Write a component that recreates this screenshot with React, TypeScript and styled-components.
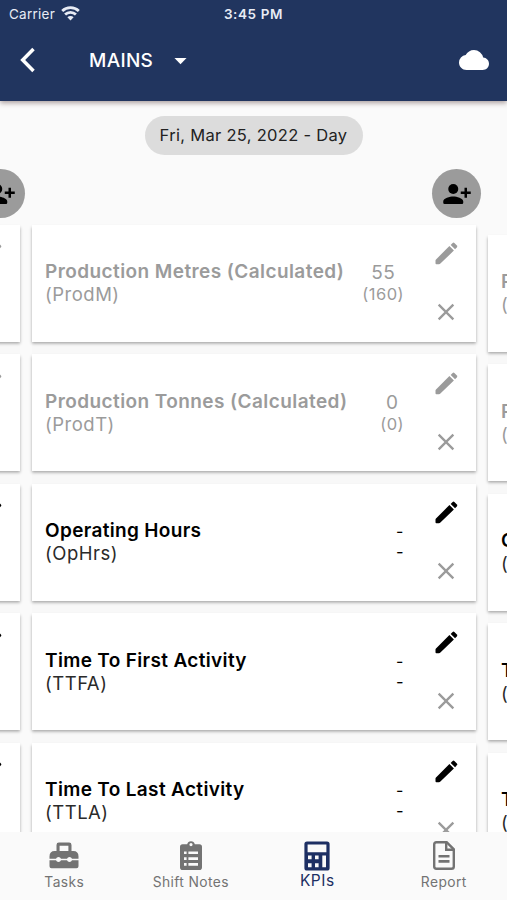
import React from "react";
import styled, { createGlobalStyle } from "styled-components";
import { MdArrowDropDown, MdClose, MdCloud } from "react-icons/md";

const GlobalStyle = createGlobalStyle`
  * { box-sizing: border-box; }
  body { margin: 0; background: #fafafa; }
  button { border: 0; padding: 0; background: none; font: inherit; color: inherit; }
  svg { display: block; flex: none; }
`;

const Screen = styled.div`
  width: 507px;
  height: 900px;
  display: flex;
  flex-direction: column;
  overflow: hidden;
  background: #fafafa;
  font-family: Inter, "Liberation Sans", sans-serif;
`;

const Header = styled.header`
  height: 101px;
  flex: none;
  background: #21355f;
  color: #fff;
  box-shadow: 0 2px 5px rgba(60, 30, 30, 0.42);
`;

const StatusBar = styled.div`
  display: grid;
  grid-template-columns: 1fr auto 1fr;
  align-items: center;
  height: 27px;
  padding: 0 9px;
  color: #e8ecf5;
`;

const Carrier = styled.div`
  display: flex;
  align-items: center;
  gap: 6px;
  font-size: 13.5px;
  letter-spacing: 0.25px;
`;

const Clock = styled.time`
  font-size: 13.5px;
  font-weight: 600;
  letter-spacing: 0.6px;
`;

const NavBar = styled.div`
  display: flex;
  align-items: center;
  height: 66px;
  padding: 0 18px 0 20px;
`;

const SectionPicker = styled.button`
  display: flex;
  align-items: center;
  gap: 13px;
  margin: 0 auto 0 53px;
  font-size: 19px;
  font-weight: 500;
  letter-spacing: 0.3px;
`;

const DateRow = styled.div`
  display: flex;
  justify-content: center;
  flex: none;
  padding-top: 15px;
`;

const DateChip = styled.button`
  width: 218px;
  height: 39px;
  padding-bottom: 2px;
  border-radius: 20px;
  background: #dcdcdc;
  color: #222;
  font-size: 16.5px;
  letter-spacing: 0.3px;
  white-space: nowrap;
`;

const Board = styled.main`
  flex: 1;
  min-height: 0;
  display: flex;
  justify-content: center;
  gap: 12px;
  overflow: hidden;
  padding-top: 14px;
`;

const Column = styled.section<{ $drop?: number }>`
  width: 444px;
  flex: none;
  display: flex;
  flex-direction: column;
  padding-top: ${(p) => p.$drop ?? 0}px;
`;

const AssignButton = styled.button`
  width: 49px;
  height: 49px;
  flex: none;
  align-self: flex-end;
  display: flex;
  align-items: center;
  justify-content: center;
  margin: 0 -5.5px 6.5px 0;
  border-radius: 50%;
  background: #9b9b9b;
  color: #000;
`;

const CardList = styled.div`
  display: flex;
  flex-direction: column;
  gap: 12.5px;
  background: #f8f8f8;
`;

const Card = styled.article<{ $muted?: boolean }>`
  display: flex;
  height: 117px;
  flex: none;
  padding: 0 14px 0 13.5px;
  background: #fff;
  color: ${(p) => (p.$muted ? "#9b9b9b" : "#000")};
  box-shadow: 0 1.5px 3px rgba(0, 0, 0, 0.34);
`;

const Names = styled.div`
  flex: 1;
  padding-top: 35.5px;
  font-size: 19px;
  line-height: 23px;
  white-space: nowrap;
`;

const Title = styled.h2<{ $muted?: boolean }>`
  margin: 0;
  font-size: 19px;
  font-weight: 600;
  letter-spacing: ${(p) => (p.$muted ? 0.42 : 0.34)}px;
`;

const Code = styled.div<{ $muted?: boolean }>`
  color: ${(p) => (p.$muted ? "#9b9b9b" : "#2a2a2a")};
  font-size: 18.5px;
  letter-spacing: 0.5px;
`;

const Figures = styled.div<{ $empty?: boolean }>`
  display: flex;
  flex-direction: column;
  align-items: center;
  padding-top: ${(p) => (p.$empty ? 36.5 : 37.5)}px;
  margin-right: 25.5px;
  font-size: ${(p) => (p.$empty ? 16 : 19)}px;
  line-height: 22px;
  letter-spacing: 0.45px;
`;

const Previous = styled.span`
  font-size: 16.5px;
  line-height: 21px;
`;

const Actions = styled.div`
  width: 32px;
  display: flex;
  flex-direction: column;
  align-items: center;
  padding-top: 17.5px;
  gap: 33px;
`;

const EditButton = styled.button`
  padding-left: 1.5px;
`;

const ClearButton = styled.button`
  color: #9b9b9b;
`;

const TabBar = styled.nav`
  height: 68px;
  flex: none;
  display: grid;
  grid-template-columns: repeat(4, 1fr);
  padding-left: 1px;
  background: #fafafa;
  position: relative;
`;

const Tab = styled.button<{ $active?: boolean }>`
  display: flex;
  flex-direction: column;
  align-items: center;
  gap: ${(p) => (p.$active ? 0 : 1.5)}px;
  padding-top: ${(p) => (p.$active ? 8.5 : 9)}px;
  color: ${(p) => (p.$active ? "#1d2f63" : "#737373")};
  font-size: ${(p) => (p.$active ? 15.5 : 13.8)}px;
  line-height: 20px;
  letter-spacing: ${(p) => (p.$active ? 0.5 : 0.4)}px;
`;

const WifiIcon = () => (
  <svg width="19" height="15" viewBox="0 0 19 15" fill="none" stroke="currentColor" strokeWidth="2.8">
    <path d="M1.2 5a12 12 0 0 1 16.6 0" />
    <path d="M4.1 8.600a7.800 7.800 0 0 1 10.800 0" />
    <path d="M9.500 14.400 6.400 11.200a4.400 4.400 0 0 1 6.200 0z" fill="currentColor" stroke="none" />
  </svg>
);

const BackIcon = () => (
  <svg width="16" height="26" viewBox="0 0 16 26" fill="none" stroke="currentColor" strokeWidth="3.5">
    <path d="M13.500 2 2.700 13l10.800 11" />
  </svg>
);

const PersonAddIcon = () => (
  <svg width="30" height="30" viewBox="0 0 24 24" fill="currentColor">
    <circle cx="9" cy="8" r="4" />
    <path d="M15 10v2h3v3h2v-3h3v-2h-3V7h-2v3zM1 18v1q0 1 1 1h14q1 0 1-1v-1c0-2.66-5.33-4-8-4s-8 1.34-8 4z" />
  </svg>
);

const PencilIcon = () => (
  <svg width="23" height="23" viewBox="0 0 23 23" fill="currentColor">
    <path d="M14.400 4.100 18.900 8.600 5.400 21.600Q4.800 22.200 4 22.200H1.400Q.500 22.200.500 21.300V18.600Q.500 17.900 1 17.400z" />
    <path d="M15.700 2.900 17.600 1Q18.500.200 19.400 1L21.900 3.500Q22.700 4.400 21.900 5.300L20.100 7.300z" />
  </svg>
);

const ToolboxIcon = () => (
  <svg width="30" height="29" viewBox="0 0 30 29" fill="currentColor">
    <path
      fillRule="evenodd"
      d="M7.5 10V4q0-2.4 2.4-2.4h10.2q2.4 0 2.4 2.4v6h1.8q5.2 0 5.2 5.5v2.3H23a2.7 2.7 0 0 0-5 0h-6a2.7 2.7 0 0 0-5 0H.5v-2.3Q.5 10 5.7 10zm3.1 0h8.8V4.7h-8.8z"
    />
    <path d="M.5 19.3H7a2.7 2.7 0 0 0 5 0h6a2.7 2.7 0 0 0 5 0h6.5v6q0 2-2 2h-25q-2 0-2-2z" />
  </svg>
);

const ClipboardIcon = () => (
  <svg width="22" height="29" viewBox="0 0 22 29" fill="currentColor">
    <path
      fillRule="evenodd"
      d="M2.6 3.2h4.6a3.9 3.9 0 0 1 7.6 0h4.6Q22 3.2 22 5.8v20.4q0 2.8-2.6 2.8H2.6Q0 29 0 26.2V5.8q0-2.6 2.6-2.6zM11 2a1.6 1.6 0 1 0 0 3.2A1.6 1.6 0 0 0 11 2zM4 10.5v2.6h2.6v-2.6zm4.4 0v2.6H18v-2.6zM4 16.3v2.6h2.6v-2.6zm4.4 0v2.6H18v-2.6zM4 22.1v2.6h2.6v-2.6zm4.4 0v2.6H18v-2.6z"
    />
  </svg>
);

const CalculatorIcon = () => (
  <svg width="26" height="30" viewBox="0 0 26 30" fill="currentColor">
    <path
      fillRule="evenodd"
      d="M3 .5h20q2.6 0 2.6 2.6v23.8q0 2.6-2.6 2.6H3Q.4 29.500.4 26.900V3.100Q.4.500 3 .500zM3.600 3.600v7.600h18.800V3.600zM4 14.600v3.600h3.600v-3.600zM11 14.600v3.600h3.600v-3.600zM18.300 14.600v11.600h3.700V14.600zM4 22.300v3.900h3.600v-3.900zM11 22.300v3.900h3.600v-3.900z"
    />
  </svg>
);

const ReportIcon = () => (
  <svg width="22" height="29" viewBox="0 0 22 29" fill="none" stroke="currentColor" strokeWidth="2.4">
    <path d="M3.400 1.200h10.300l7.100 7.100v17.200q0 2.300-2.300 2.300H3.400q-2.200 0-2.200-2.300V3.500q0-2.300 2.200-2.300z" />
    <path d="M13.200 1.500v7.300h7.300" />
    <path d="M5.500 15.300h11M5.500 20.400h11" strokeWidth="2.600" />
  </svg>
);

type Kpi = { title: string; code: string; value: string; previous: string; muted?: boolean };

const kpis: Kpi[] = [
  { title: "Production Metres (Calculated)", code: "(ProdM)", value: "55", previous: "(160)", muted: true },
  { title: "Production Tonnes (Calculated)", code: "(ProdT)", value: "0", previous: "(0)", muted: true },
  { title: "Operating Hours", code: "(OpHrs)", value: "-", previous: "-" },
  { title: "Time To First Activity", code: "(TTFA)", value: "-", previous: "-" },
  { title: "Time To Last Activity", code: "(TTLA)", value: "-", previous: "-" },
];

const KpiColumn = ({ drop }: { drop?: number }) => (
  <Column $drop={drop}>
    <AssignButton aria-label="Assign person">
      <PersonAddIcon />
    </AssignButton>
    <CardList>
      {kpis.map((kpi) => (
        <Card key={kpi.code} $muted={kpi.muted}>
          <Names>
            <Title $muted={kpi.muted}>{kpi.title}</Title>
            <Code $muted={kpi.muted}>{kpi.code}</Code>
          </Names>
          <Figures $empty={kpi.value === "-"}>
            <span>{kpi.value}</span>
            <Previous>{kpi.previous}</Previous>
          </Figures>
          <Actions>
            <EditButton aria-label="Edit">
              <PencilIcon />
            </EditButton>
            <ClearButton aria-label="Clear">
              <MdClose size={28} />
            </ClearButton>
          </Actions>
        </Card>
      ))}
    </CardList>
  </Column>
);

export default function App() {
  return (
    <Screen>
      <GlobalStyle />
      <Header>
        <StatusBar>
          <Carrier>
            Carrier
            <WifiIcon />
          </Carrier>
          <Clock>3:45 PM</Clock>
        </StatusBar>
        <NavBar>
          <button aria-label="Back">
            <BackIcon />
          </button>
          <SectionPicker>
            MAINS
            <MdArrowDropDown size={29} />
          </SectionPicker>
          <MdCloud size={30} />
        </NavBar>
      </Header>
      <DateRow>
        <DateChip>Fri, Mar 25, 2022 - Day</DateChip>
      </DateRow>
      <Board>
        <KpiColumn />
        <KpiColumn />
        <KpiColumn drop={10} />
      </Board>
      <TabBar>
        <Tab>
          <ToolboxIcon />
          Tasks
        </Tab>
        <Tab>
          <ClipboardIcon />
          Shift Notes
        </Tab>
        <Tab $active>
          <CalculatorIcon />
          KPIs
        </Tab>
        <Tab>
          <ReportIcon />
          Report
        </Tab>
      </TabBar>
    </Screen>
  );
}
